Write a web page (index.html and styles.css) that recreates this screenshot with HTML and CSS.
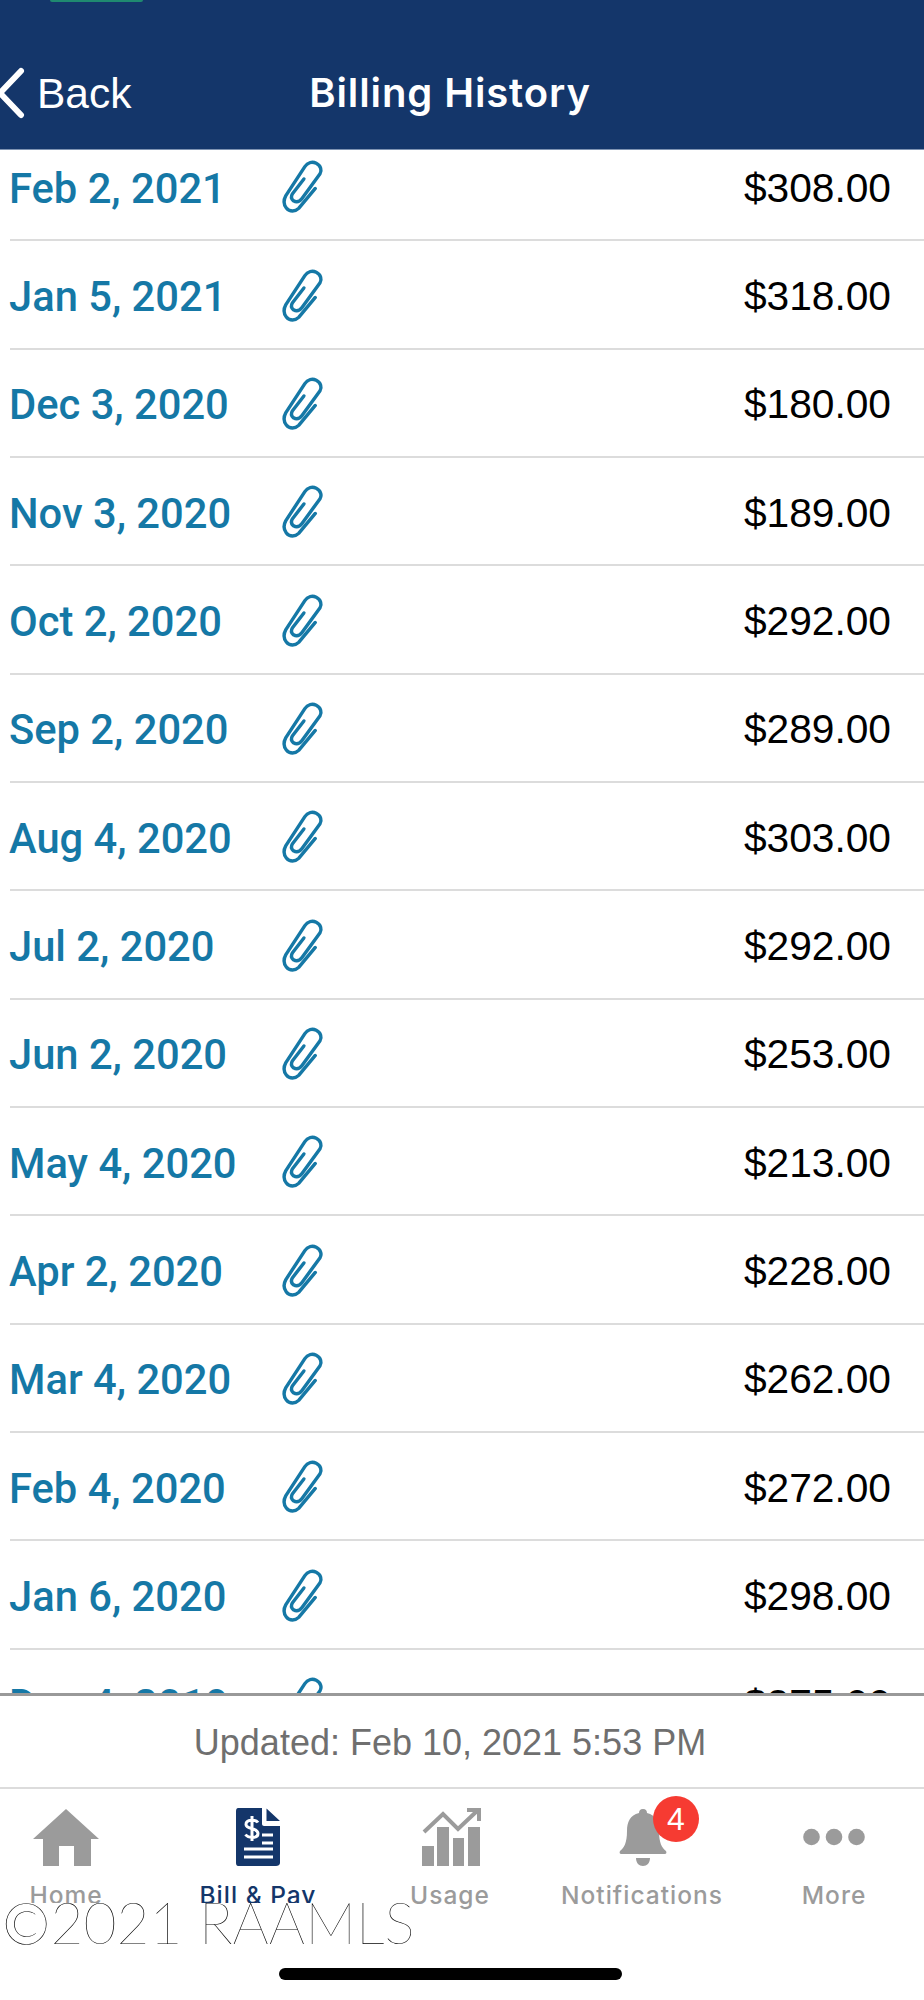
FILE: index.html
```html
<!DOCTYPE html>
<html lang="en">
<head>
<meta charset="utf-8">
<title>Billing History</title>
<link rel="stylesheet" href="styles.css">
</head>
<body>
<svg class="defs" width="0" height="0" aria-hidden="true">
  <symbol id="clip" viewBox="0 0 46 60">
    <path d="M37 31 L19.5 52 C16 55.5 10 56 6.5 51.5 C3 47 3.5 43 6 38.5 L26 8 C29 3.5 34 2.5 38 4.5 C43 7 44 12 42 15.5 L23 41.5 C20 45.5 16.5 45.5 14 44 C11.5 42 11.5 39 13 36.5 L25 21" fill="none" stroke="currentColor" stroke-width="3.6" stroke-linecap="round" stroke-linejoin="round"/>
  </symbol>
</svg>
<div class="app">
  <header class="nav">
    <div class="pill"></div>
    <div class="bar">
      <div class="back">
        <svg class="chev" viewBox="0 0 25 54"><path d="M21 5 L0 27 L21 49" fill="none" stroke="#fff" stroke-width="6" stroke-linecap="round" stroke-linejoin="round"/></svg>
        <span class="back-label">Back</span>
      </div>
      <h1 class="title">Billing History</h1>
    </div>
  </header>
  <main class="list">
    <div class="scroller">
      <div class="row"><span class="date">Feb 2, 2021</span><svg class="clip"><use href="#clip"/></svg><span class="amt">$308.00</span></div>
      <div class="row"><span class="date">Jan 5, 2021</span><svg class="clip"><use href="#clip"/></svg><span class="amt">$318.00</span></div>
      <div class="row"><span class="date">Dec 3, 2020</span><svg class="clip"><use href="#clip"/></svg><span class="amt">$180.00</span></div>
      <div class="row"><span class="date">Nov 3, 2020</span><svg class="clip"><use href="#clip"/></svg><span class="amt">$189.00</span></div>
      <div class="row"><span class="date">Oct 2, 2020</span><svg class="clip"><use href="#clip"/></svg><span class="amt">$292.00</span></div>
      <div class="row"><span class="date">Sep 2, 2020</span><svg class="clip"><use href="#clip"/></svg><span class="amt">$289.00</span></div>
      <div class="row"><span class="date">Aug 4, 2020</span><svg class="clip"><use href="#clip"/></svg><span class="amt">$303.00</span></div>
      <div class="row"><span class="date">Jul 2, 2020</span><svg class="clip"><use href="#clip"/></svg><span class="amt">$292.00</span></div>
      <div class="row"><span class="date">Jun 2, 2020</span><svg class="clip"><use href="#clip"/></svg><span class="amt">$253.00</span></div>
      <div class="row"><span class="date">May 4, 2020</span><svg class="clip"><use href="#clip"/></svg><span class="amt">$213.00</span></div>
      <div class="row"><span class="date">Apr 2, 2020</span><svg class="clip"><use href="#clip"/></svg><span class="amt">$228.00</span></div>
      <div class="row"><span class="date">Mar 4, 2020</span><svg class="clip"><use href="#clip"/></svg><span class="amt">$262.00</span></div>
      <div class="row"><span class="date">Feb 4, 2020</span><svg class="clip"><use href="#clip"/></svg><span class="amt">$272.00</span></div>
      <div class="row"><span class="date">Jan 6, 2020</span><svg class="clip"><use href="#clip"/></svg><span class="amt">$298.00</span></div>
      <div class="row"><span class="date">Dec 4, 2019</span><svg class="clip"><use href="#clip"/></svg><span class="amt">$275.00</span></div>
    </div>
  </main>
  <div class="updated">Updated: Feb 10, 2021 5:53 PM</div>
  <nav class="tabs">
    <div class="tab">
      <svg class="tab-icon" viewBox="0 0 70 60"><path fill="#9b9b9b" d="M35 2 L68 32 H60 V59 H43 V39 H28 V59 H12 V32 H2 Z"/></svg>
      <span class="tab-label">Home</span>
    </div>
    <div class="tab active">
      <svg class="tab-icon" viewBox="0 0 70 60"><path fill="#14366a" d="M15 1 H39 V17 C39 18 40 19 41 19 H57 V56 C57 58 55 59 53 59 H15 C14 59 13 58 13 56 V4 C13 2 14 1 15 1 Z M43.5 1.5 L57 14 H43.5 Z"/><path fill="none" stroke="#fff" stroke-width="3" d="M35 15.5 C33 12.5 23 12 23 17.5 C23 23 35 20 35 26.5 C35 32 25 31 22.5 27.5 M29 9 V34"/><path fill="none" stroke="#fff" stroke-width="3" d="M39 28 H50 M39 36 H50 M21 42 H50 M21 50 H50"/></svg>
      <span class="tab-label">Bill &amp; Pay</span>
    </div>
    <div class="tab">
      <svg class="tab-icon" viewBox="0 0 70 60"><path fill="#9b9b9b" d="M7 39 H19 V59 H7 Z M22 20 H34 V59 H22 Z M38 31 H49 V59 H38 Z M53 20 H65 V59 H53 Z"/><path fill="none" stroke="#9b9b9b" stroke-width="4" d="M9 25 L28 7 L43 22 L62 4 M52 3 H64 V14"/></svg>
      <span class="tab-label">Usage</span>
    </div>
    <div class="tab">
      <div class="bell-wrap">
        <svg class="tab-icon" viewBox="0 0 70 60"><path fill="#9b9b9b" d="M36 2 C39 2 40 4 40 6 C49 8 52 15 52 24 C52 36 55 41 59 44 C60 46 59 47 58 47 H14 C13 47 12 46 13 44 C17 41 20 36 20 24 C20 15 23 8 32 6 C32 4 33 2 36 2 Z M29 51 H43 C43 56 40 59 36 59 C32 59 29 56 29 51 Z"/></svg>
        <span class="badge">4</span>
      </div>
      <span class="tab-label">Notifications</span>
    </div>
    <div class="tab">
      <svg class="tab-icon" viewBox="0 0 70 60"><circle cx="12.5" cy="30" r="8.3" fill="#9b9b9b"/><circle cx="35" cy="30" r="8.3" fill="#9b9b9b"/><circle cx="57.5" cy="30" r="8.3" fill="#9b9b9b"/></svg>
      <span class="tab-label">More</span>
    </div>
  </nav>
  <div class="home-zone"><div class="indicator"></div></div>
  <div class="watermark">©2021 RAAMLS</div>
</div>
</body>
</html>
```

FILE: styles.css
```css
* { box-sizing: border-box; }
html, body { margin: 0; padding: 0; background: #fff; }
body { font-family: "Liberation Sans", Arial, sans-serif; }
.defs { position: absolute; }
.app { position: relative; width: 924px; height: 2000px; display: flex; flex-direction: column; overflow: hidden; }

.nav { height: 150px; background: #14366a; flex: none; display: flex; flex-direction: column; border-bottom: 1px solid #7e93b2; }
.pill { width: 93px; height: 2px; margin-left: 50px; background: #1f8a70; border-radius: 0 0 4px 4px; flex: none; }
.bar { flex: 1; display: grid; grid-template-columns: 1fr auto 1fr; align-items: center; padding-top: 35px; margin-right: 24px; }
.back { display: flex; align-items: center; gap: 12px; color: #fff; }
.chev { width: 25px; height: 54px; display: block; }
.back-label { font-size: 42.5px; line-height: 48px; padding-top: 2px; }
.title { margin: 0; color: #fff; font-family: "Inter", "Liberation Sans", sans-serif; font-size: 40px; line-height: 48px; font-weight: 600; letter-spacing: 0.9px; text-align: center; }

.list { flex: none; height: 1546px; overflow: hidden; border-bottom: 3px solid #999; }
.scroller { margin-top: -17px; }
.row { height: 108.35px; margin-left: 10px; padding-top: 4px; border-bottom: 2px solid #dcdcdc; display: flex; align-items: center; padding-right: 33px; }
.date { width: 271px; margin-left: -1px; color: #1578a6; font-family: "Roboto", "Liberation Sans", sans-serif; font-size: 41.7px; font-weight: 500; white-space: nowrap; }
.clip { width: 44px; height: 57px; color: #1578a6; flex: none; margin-top: -1px; }
.amt { margin-left: auto; color: #000; font-size: 40.7px; }

.updated { flex: none; height: 93px; border-bottom: 2px solid #dcdcdc; padding-top: 2px; padding-right: 24px; display: flex; align-items: center; justify-content: center; color: #6f6f6f; font-size: 36px; }

.tabs { flex: none; height: 115px; display: grid; grid-template-columns: repeat(5, 192px); margin-left: -30px; padding-top: 18px; }
.tab { display: flex; flex-direction: column; align-items: center; color: #9b9b9b; gap: 14px; }
.tab.active { color: #14366a; }
.tab-icon { width: 70px; height: 60px; display: block; }
.tab-label { font-family: "Inter", "Liberation Sans", sans-serif; font-size: 24.5px; line-height: 28px; font-weight: 500; letter-spacing: 1px; white-space: nowrap; }
.bell-wrap { position: relative; }
.badge { position: absolute; left: 46px; top: -11px; width: 46px; height: 46px; border-radius: 50%; background: #f63b32; color: #fff; font-size: 32px; display: flex; align-items: center; justify-content: center; }

.home-zone { flex: 1; display: flex; justify-content: center; padding-top: 64px; padding-right: 24px; }
.indicator { width: 343px; height: 12px; border-radius: 6px; background: #000; }

.watermark { position: absolute; left: 0; top: 1903px; width: 410px; height: 38px; padding-left: 2px; background: #fff; font-family: "Lato", sans-serif; font-weight: 100; font-size: 57px; line-height: 38px; color: #000; white-space: nowrap; }
```
